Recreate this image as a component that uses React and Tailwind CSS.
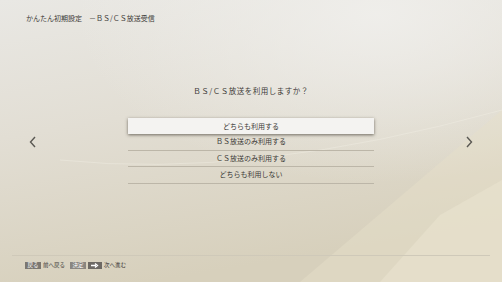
import React, { useState } from 'react';

const options = ['どちらも利用する', 'ＢＳ放送のみ利用する', 'ＣＳ放送のみ利用する', 'どちらも利用しない'];

const Backdrop = () => (
    <svg className="absolute inset-0 w-full h-full" viewBox="0 0 502 282" preserveAspectRatio="none">
        <defs>
            <linearGradient id="bg" x1="0" y1="0" x2="0.3" y2="1">
                <stop offset="0" stopColor="#e9e8e4" />
                <stop offset="0.45" stopColor="#e2ded4" />
                <stop offset="1" stopColor="#d7d0bc" />
            </linearGradient>
            <radialGradient id="glow" cx="0.75" cy="0.05" r="0.6">
                <stop offset="0" stopColor="#f0efec" stopOpacity="0.9" />
                <stop offset="1" stopColor="#f0efec" stopOpacity="0" />
            </radialGradient>
        </defs>
        <rect width="502" height="282" fill="url(#bg)" />
        <rect width="502" height="282" fill="url(#glow)" />
        <path d="M300 282 L502 110 L502 282 Z" fill="#e6dfca" opacity="0.45" />
        <path d="M380 282 L440 215 L502 180 L502 282 Z" fill="#ebe5d2" opacity="0.5" />
        <path d="M60 160 Q250 180 502 110" stroke="#f2efe6" strokeWidth="1" fill="none" opacity="0.4" />
    </svg>
);

const App = () => {
    const [selected, setSelected] = useState(0);

    return (
        <div
            className="relative w-[502px] h-[282px] overflow-hidden text-[#3c3a37]"
            style={{ fontFamily: '"Noto Sans CJK JP", "Noto Sans", sans-serif' }}
        >
            <Backdrop />
            <div className="relative flex flex-col h-full">
                <div className="pl-[26px] pt-[13px] text-[7px] leading-[10px]">かんたん初期設定　－ＢＳ/ＣＳ放送受信</div>

                <div className="flex items-start mt-[63px]">
                    <div className="w-[128px] flex justify-center pt-[50px] pr-[62px]">
                        <svg width="8" height="12" viewBox="0 0 8 12">
                            <path d="M6 1 L1.5 6 L6 11" stroke="#5a5853" strokeWidth="1.4" fill="none" />
                        </svg>
                    </div>
                    <div className="w-[246px] flex flex-col">
                        <div className="text-center text-[7.5px] leading-[10px] tracking-[0.5px]">ＢＳ/ＣＳ放送を利用しますか？</div>
                        <div className="mt-[22px] flex flex-col">
                            {options.map((o, i) => (
                                <button
                                    key={o}
                                    onClick={() => setSelected(i)}
                                    className={
                                        i === selected
                                            ? 'h-[16px] bg-[#f4f3f1] text-center text-[7px] leading-[16px] shadow-[0_1px_3px_rgba(60,55,45,0.7)]'
                                            : 'h-[16.5px] text-center text-[7px] leading-[15px] border-b border-[#bcb6a8]'
                                    }
                                >
                                    {o}
                                </button>
                            ))}
                        </div>
                    </div>
                    <div className="flex-1 flex justify-center pt-[50px] pl-[62px]">
                        <svg width="8" height="12" viewBox="0 0 8 12">
                            <path d="M2 1 L6.5 6 L2 11" stroke="#5a5853" strokeWidth="1.4" fill="none" />
                        </svg>
                    </div>
                </div>

                <div className="mt-auto mx-[12px] border-t border-[#cfc9b9]" />
                <div className="flex items-center gap-[1px] pl-[25px] h-[18px] mb-[8px] text-[5.5px] leading-[7px]">
                    <span className="bg-[#7b7771] text-white px-[2px] w-[16px] text-center">戻る</span>
                    <span className="ml-[1px]">前へ戻る</span>
                    <span className="bg-[#8a8680] text-white ml-[4px] w-[16px] text-center">決定</span>
                    <span className="bg-[#6d6964] text-white ml-[1px] w-[14px] h-[7px] flex items-center justify-center">
                        <svg width="8" height="5" viewBox="0 0 8 5">
                            <path d="M0 2.5 H5 M4 0.5 L6.5 2.5 L4 4.5" stroke="white" strokeWidth="1.3" fill="none" />
                        </svg>
                    </span>
                    <span className="ml-[1px]">次へ進む</span>
                </div>
            </div>
        </div>
    );
};

export default App;
